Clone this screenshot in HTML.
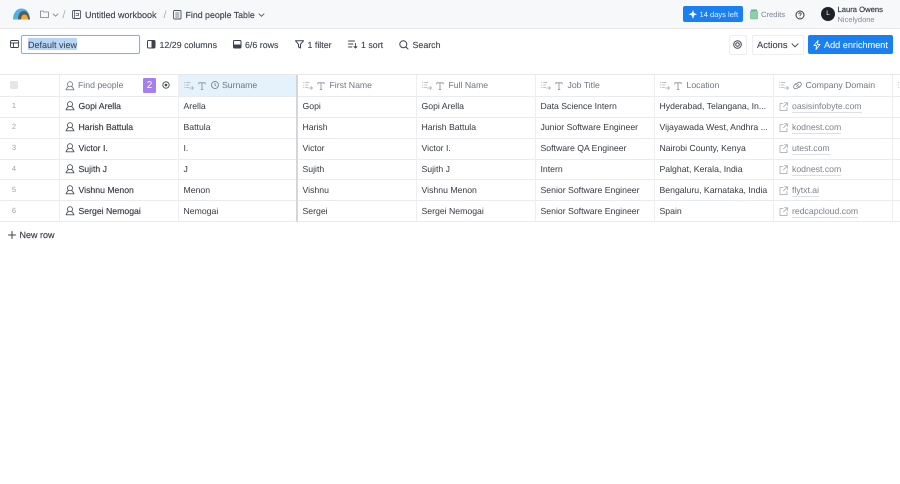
<!DOCTYPE html>
<html><head><meta charset="utf-8"><style>
html,body{margin:0;padding:0;width:900px;height:484px;overflow:hidden;background:#fff;font-family:"Liberation Sans",sans-serif;color:#2f343c;text-rendering:geometricPrecision}
.a{position:absolute;white-space:nowrap}
.t{position:absolute;white-space:nowrap;font-size:8.7px;line-height:12px;letter-spacing:0}
.h{color:#6f7682;top:79px}
.c{color:#343942}
.b{-webkit-text-stroke:.15px #343942}
.l{color:#7b828d;border-bottom:1px solid #dcdfe3;line-height:11px}
.tb{font-size:8.85px;color:#3d434c;top:38.5px;-webkit-text-stroke:.12px #3d434c}
.n{color:#9aa0a8;font-size:7.5px;width:28px;text-align:center;left:0}
.hl{position:absolute;left:0;width:900px;height:1px;background:#e9ebee}
.vl{position:absolute;top:75px;height:147px;width:1px;background:#eceef0}
svg{position:absolute;overflow:visible;fill:none;stroke-linecap:round;stroke-linejoin:round}
</style></head><body>
<svg width="0" height="0" style="left:0;top:0"><defs>
<g id="p" stroke-width=".9"><circle cx="5" cy="3.2" r="2.5"/><path d="M3.4 5.4C2.2 6.4 1.5 7.5 1 8.8H9C8.5 7.5 7.8 6.4 6.6 5.4"/></g>
<g id="s" stroke="#a5aab1" stroke-width=".75"><path d="M.5 1.5H1M2.500 1.500H6M.5 4H1M2.500 4H5M.5 6.500H1M2.500 6.500H4.500M5.500 7H9.500M8 5.500L9.500 7 8 8.500"/></g>
<g id="T" stroke="#858b95" stroke-width=".8"><path d="M.8 2V.8H7.200V2M4 .8V7.500M3 7.500H5"/></g>
<g id="e" stroke="#a0a5ad" stroke-width=".75"><path d="M4 1.500H1V8.500H8V5.500M5.500 .8H8.500V3.800M8.500 .8L4.500 4.800"/></g>
</defs></svg>

<!-- top bar -->
<div class="a" style="left:0;top:0;width:900px;height:28px;background:#f7f8fa;border-bottom:1px solid #e6e8eb"></div>
<svg style="left:13px;top:8px" width="17" height="12"><path d="M0 11.500C0 5 3.500 .5 8.500 .5S17 5 17 11.500Z" fill="#4fb3e0"/><path d="M5 11.500C5 6.500 7 3 10.500 3S16 6 17 11.500Z" fill="#545a66"/><path d="M8 11.500C8 8.500 9.500 6.500 11.500 6.500S15 8.500 15 11.500Z" fill="#f7a823"/></svg>
<svg style="left:40px;top:10px" width="9" height="8"><path d="M.5 1H3L4 2H8.500V7.500H.5Z" stroke="#7a808a" stroke-width=".8"/></svg>
<svg style="left:52px;top:12.500px" width="7" height="4"><path d="M1 .8L3.500 3.200 6 .8" stroke="#7a808a" stroke-width=".8"/></svg>
<div class="t" style="left:62.500px;top:8.500px;color:#a5aab1;font-size:10.500px">/</div>
<svg style="left:72px;top:10px" width="9" height="9"><rect x=".5" y=".5" width="8" height="8" rx="1" stroke="#4f5560" stroke-width=".9"/><path d="M2.500 .5V8.500M4 3.500H6.500V5.500H4" stroke="#4f5560" stroke-width=".8"/></svg>
<div class="t" style="left:85px;top:8.500px;color:#3d434c;font-size:9px;-webkit-text-stroke:.15px #3d434c">Untitled workbook</div>
<div class="t" style="left:163.500px;top:8.500px;color:#a5aab1;font-size:10.500px">/</div>
<svg style="left:173px;top:10px" width="9" height="10"><rect x=".5" y=".5" width="7.500" height="8.500" rx="1" stroke="#4f5560" stroke-width=".9"/><path d="M2.500 3H6M2.500 5H6M2.500 7H6" stroke="#4f5560" stroke-width=".7"/></svg>
<div class="t" style="left:185.500px;top:8.500px;color:#3d434c;font-size:8.800px;-webkit-text-stroke:.15px #3d434c">Find people Table</div>
<svg style="left:258px;top:12.500px" width="7" height="4"><path d="M1 .8L3.500 3.300 6 .8" stroke="#4f5560" stroke-width=".9"/></svg>

<div class="a" style="left:683px;top:6px;width:60px;height:16px;background:#1a7ff0;border-radius:2px"></div>
<svg style="left:688px;top:10px" width="9" height="9"><path d="M5 0L6 3 9 4.300 6 5.500 5 9 3.800 5.500 .5 4.300 3.800 3Z" fill="#fff"/></svg>
<div class="t" style="left:699.500px;top:8.500px;color:#eaf3ff;font-size:7.550px">14 days left</div>
<svg style="left:750px;top:9px" width="8" height="10"><rect x=".5" y="2" width="7" height="8" rx="1" fill="#8fd0ac" stroke="#63b486" stroke-width=".6"/><rect x="1" y=".5" width="6" height="1.500" fill="#63b486"/></svg>
<div class="t" style="left:761px;top:8.500px;color:#7b828d;font-size:7.600px">Credits</div>
<svg style="left:795px;top:9.500px" width="10" height="10"><circle cx="5" cy="5" r="4" stroke="#333a44"/><path d="M3.800 4C3.800 3.200 4.400 2.800 5 2.800S6.200 3.300 6.200 4C6.200 4.900 5 4.900 5 5.800M5 7.100V7.200" stroke="#333a44" stroke-width=".8"/></svg>
<div class="a" style="left:821px;top:7px;width:14px;height:14px;border-radius:50%;background:#1d2128;color:#fff;font-size:6.500px;line-height:14px;text-align:center">L</div>
<div class="t" style="left:837.500px;top:4px;color:#2f343c;font-size:7.650px;-webkit-text-stroke:.15px #2f343c">Laura Owens</div>
<div class="t" style="left:837.500px;top:13.500px;color:#858b95;font-size:7.500px">Nicelydone</div>

<!-- toolbar -->
<svg style="left:9.500px;top:40px" width="9" height="8"><rect x=".5" y=".5" width="8" height="7" rx="1" stroke="#3d434c" stroke-width=".9"/><path d="M.5 3H8.500M3.500 3V7.500" stroke="#3d434c" stroke-width=".9"/></svg>
<div class="a" style="left:21px;top:35px;width:117px;height:17px;border:1px solid #7fb4e8;border-radius:2px;box-shadow:0 0 1px #bcd9f5"></div>
<div class="a" style="left:28px;top:38px;width:49px;height:12px;background:#b8d5f6"></div>
<div class="t" style="left:28px;top:38.500px;color:#2f3a48;font-size:9px">Default view</div>

<svg style="left:147px;top:40px" width="9" height="9"><rect x=".5" y=".5" width="7.500" height="7.500" rx="1" stroke="#3d434c"/><rect x="4.500" y=".5" width="3.500" height="7.500" fill="#3d434c"/></svg>
<div class="t tb" style="left:159.500px">12/29 columns</div>
<svg style="left:233px;top:40px" width="9" height="9"><rect x=".5" y=".5" width="7.500" height="7.500" rx="1" stroke="#3d434c"/><rect x=".5" y="4.500" width="7.500" height="3.500" fill="#3d434c"/></svg>
<div class="t tb" style="left:245px">6/6 rows</div>
<svg style="left:295px;top:40px" width="9" height="9"><path d="M.5.8H8.500L5.500 4.300V8L3.500 7V4.300Z" stroke="#3d434c"/></svg>
<div class="t tb" style="left:307.500px">1 filter</div>
<svg style="left:348px;top:40px" width="10" height="9"><path d="M.5 1H6.500M.5 4H5M.5 7H4M7.500 3.500V8M6 6.500L7.500 8 9 6.500" stroke="#3d434c" stroke-width=".9"/></svg>
<div class="t tb" style="left:361px">1 sort</div>
<svg style="left:399px;top:39.500px" width="10" height="10"><circle cx="4.300" cy="4.300" r="3.500" stroke="#3d434c"/><path d="M7 7L9 9" stroke="#3d434c"/></svg>
<div class="t tb" style="left:412.500px">Search</div>

<div class="a" style="left:729px;top:35px;width:16px;height:18px;border:1px solid #eceef0;border-radius:2px"></div>
<svg style="left:733px;top:39.500px" width="9" height="9"><circle cx="4.500" cy="4.500" r="3.800" stroke="#3d434c"/><circle cx="4.500" cy="4.500" r="1.800" stroke="#3d434c"/></svg>
<div class="a" style="left:752px;top:35px;width:50px;height:18px;border:1px solid #eceef0;border-radius:2px"></div>
<div class="t tb" style="left:757px;font-size:9.300px">Actions</div>
<svg style="left:790.500px;top:42.500px" width="8" height="5"><path d="M1 .8L4 3.800 7 .8" stroke="#3d434c"/></svg>
<div class="a" style="left:808px;top:35px;width:85px;height:19px;background:#1a7ff0;border-radius:2px"></div>
<svg style="left:813px;top:39.500px" width="8" height="10"><path d="M5 .5L1 5.500H3.500L3 9.500 7 4.500H4.500Z" stroke="#fff" stroke-width=".9"/></svg>
<div class="t" style="left:824px;top:38.500px;color:#f2f7ff;font-size:9.150px;-webkit-text-stroke:.12px #f2f7ff">Add enrichment</div>

<!-- table -->
<div class="a" style="left:178px;top:75px;width:118px;height:21px;background:#e4f2fc"></div>
<div class="hl" style="top:74px;background:#e6e8eb"></div>
<div class="hl" style="top:96px"></div><div class="hl" style="top:117px"></div><div class="hl" style="top:138px"></div><div class="hl" style="top:159px"></div><div class="hl" style="top:179px"></div><div class="hl" style="top:200px"></div><div class="hl" style="top:221px"></div>
<div class="vl" style="left:59px"></div><div class="vl" style="left:178px"></div>
<div class="a" style="left:296px;top:75px;width:2px;height:147px;background:#d3d7dc"></div>
<div class="vl" style="left:416px"></div><div class="vl" style="left:535px"></div><div class="vl" style="left:654px"></div><div class="vl" style="left:773px"></div><div class="vl" style="left:892px"></div>

<div class="a" style="left:10px;top:81px;width:8px;height:8px;background:#e3e5e9;border-radius:1.500px"></div>
<svg style="left:65px;top:80.500px" width="10" height="10"><use href="#p" stroke="#777d87"/></svg>
<div class="t h" style="left:78px">Find people</div>
<div class="a" style="left:143px;top:78px;width:13px;height:15px;background:#a57ef0;border-radius:1.500px;color:#fff;font-size:10px;line-height:15px;text-align:center">2</div>
<svg style="left:162px;top:81px" width="8" height="8"><circle cx="4" cy="4" r="3.200" stroke="#3d434c" stroke-width=".9"/><circle cx="4" cy="4" r="1.300" fill="#3d434c"/></svg>

<svg style="left:184px;top:81px" width="10" height="10"><use href="#s"/></svg>
<svg style="left:198px;top:81.500px" width="8" height="9"><use href="#T"/></svg>
<svg style="left:211px;top:81px" width="8" height="8"><circle cx="4" cy="4" r="3.500" stroke="#6f7682" stroke-width=".8"/><path d="M4 2V4.300L5.200 5" stroke="#6f7682" stroke-width=".7"/></svg>
<div class="t h" style="left:222px">Surname</div>

<svg style="left:303px;top:81px" width="10" height="10"><use href="#s"/></svg><svg style="left:317px;top:81.500px" width="8" height="9"><use href="#T"/></svg><div class="t h" style="left:329.500px">First Name</div>
<svg style="left:422px;top:81px" width="10" height="10"><use href="#s"/></svg><svg style="left:436px;top:81.500px" width="8" height="9"><use href="#T"/></svg><div class="t h" style="left:448.500px">Full Name</div>
<svg style="left:541px;top:81px" width="10" height="10"><use href="#s"/></svg><svg style="left:555px;top:81.500px" width="8" height="9"><use href="#T"/></svg><div class="t h" style="left:567.500px">Job Title</div>
<svg style="left:660px;top:81px" width="10" height="10"><use href="#s"/></svg><svg style="left:674px;top:81.500px" width="8" height="9"><use href="#T"/></svg><div class="t h" style="left:686.500px">Location</div>
<svg style="left:779px;top:81px" width="10" height="10"><use href="#s"/></svg>
<svg style="left:793px;top:81px" width="9" height="9"><path d="M3.500 5.500L5.500 3.500M3 3.500L4.500 2C5.500 1 7 1 7.800 1.800S8.500 4 7.500 5L6 6.500M6 5.500L4.500 7C3.500 8 2 8 1.200 7.200S.5 5 1.500 4L3 2.500" stroke="#6f7682" stroke-width=".8"/></svg>
<div class="t h" style="left:805.500px">Company Domain</div>
<svg style="left:898px;top:81px" width="10" height="10"><use href="#s"/></svg>

<!-- rows -->
<div class="t n" style="top:100px">1</div><div class="t n" style="top:121px">2</div><div class="t n" style="top:142px">3</div><div class="t n" style="top:163px">4</div><div class="t n" style="top:184px">5</div><div class="t n" style="top:205px">6</div>

<svg style="left:65px;top:101px" width="10" height="10"><use href="#p" stroke="#4a505a"/></svg><div class="t c b" style="left:78.500px;top:100px">Gopi Arella</div>
<svg style="left:65px;top:122px" width="10" height="10"><use href="#p" stroke="#4a505a"/></svg><div class="t c b" style="left:78.500px;top:121px">Harish Battula</div>
<svg style="left:65px;top:143px" width="10" height="10"><use href="#p" stroke="#4a505a"/></svg><div class="t c b" style="left:78.500px;top:142px">Victor I.</div>
<svg style="left:65px;top:164px" width="10" height="10"><use href="#p" stroke="#4a505a"/></svg><div class="t c b" style="left:78.500px;top:163px">Sujith J</div>
<svg style="left:65px;top:185px" width="10" height="10"><use href="#p" stroke="#4a505a"/></svg><div class="t c b" style="left:78.500px;top:184px">Vishnu Menon</div>
<svg style="left:65px;top:206px" width="10" height="10"><use href="#p" stroke="#4a505a"/></svg><div class="t c b" style="left:78.500px;top:205px">Sergei Nemogai</div>

<div class="t c" style="left:183.500px;top:100px">Arella</div><div class="t c" style="left:183.500px;top:121px">Battula</div><div class="t c" style="left:183.500px;top:142px">I.</div><div class="t c" style="left:183.500px;top:163px">J</div><div class="t c" style="left:183.500px;top:184px">Menon</div><div class="t c" style="left:183.500px;top:205px">Nemogai</div>

<div class="t c" style="left:302.500px;top:100px">Gopi</div><div class="t c" style="left:302.500px;top:121px">Harish</div><div class="t c" style="left:302.500px;top:142px">Victor</div><div class="t c" style="left:302.500px;top:163px">Sujith</div><div class="t c" style="left:302.500px;top:184px">Vishnu</div><div class="t c" style="left:302.500px;top:205px">Sergei</div>

<div class="t c" style="left:421.500px;top:100px">Gopi Arella</div><div class="t c" style="left:421.500px;top:121px">Harish Battula</div><div class="t c" style="left:421.500px;top:142px">Victor I.</div><div class="t c" style="left:421.500px;top:163px">Sujith J</div><div class="t c" style="left:421.500px;top:184px">Vishnu Menon</div><div class="t c" style="left:421.500px;top:205px">Sergei Nemogai</div>

<div class="t c" style="left:540.500px;top:100px">Data Science Intern</div><div class="t c" style="left:540.500px;top:121px">Junior Software Engineer</div><div class="t c" style="left:540.500px;top:142px">Software QA Engineer</div><div class="t c" style="left:540.500px;top:163px">Intern</div><div class="t c" style="left:540.500px;top:184px">Senior Software Engineer</div><div class="t c" style="left:540.500px;top:205px">Senior Software Engineer</div>

<div class="t c" style="left:659.500px;top:100px">Hyderabad, Telangana, In...</div><div class="t c" style="left:659.500px;top:121px">Vijayawada West, Andhra ...</div><div class="t c" style="left:659.500px;top:142px">Nairobi County, Kenya</div><div class="t c" style="left:659.500px;top:163px">Palghat, Kerala, India</div><div class="t c" style="left:659.500px;top:184px">Bengaluru, Karnataka, India</div><div class="t c" style="left:659.500px;top:205px">Spain</div>

<svg style="left:779px;top:101.500px" width="9" height="9"><use href="#e"/></svg><div class="t l" style="left:792px;top:100.500px">oasisinfobyte.com</div>
<svg style="left:779px;top:122.500px" width="9" height="9"><use href="#e"/></svg><div class="t l" style="left:792px;top:121.500px">kodnest.com</div>
<svg style="left:779px;top:143.500px" width="9" height="9"><use href="#e"/></svg><div class="t l" style="left:792px;top:142.500px">utest.com</div>
<svg style="left:779px;top:164.500px" width="9" height="9"><use href="#e"/></svg><div class="t l" style="left:792px;top:163.500px">kodnest.com</div>
<svg style="left:779px;top:185.500px" width="9" height="9"><use href="#e"/></svg><div class="t l" style="left:792px;top:184.500px">flytxt.ai</div>
<svg style="left:779px;top:206.500px" width="9" height="9"><use href="#e"/></svg><div class="t l" style="left:792px;top:205.500px">redcapcloud.com</div>

<svg style="left:7.500px;top:231px" width="8" height="8"><path d="M4 .5V7.500M.5 4H7.500" stroke="#3d434c"/></svg>
<div class="t c b" style="left:19.500px;top:229px;font-size:9px">New row</div>
</body></html>
